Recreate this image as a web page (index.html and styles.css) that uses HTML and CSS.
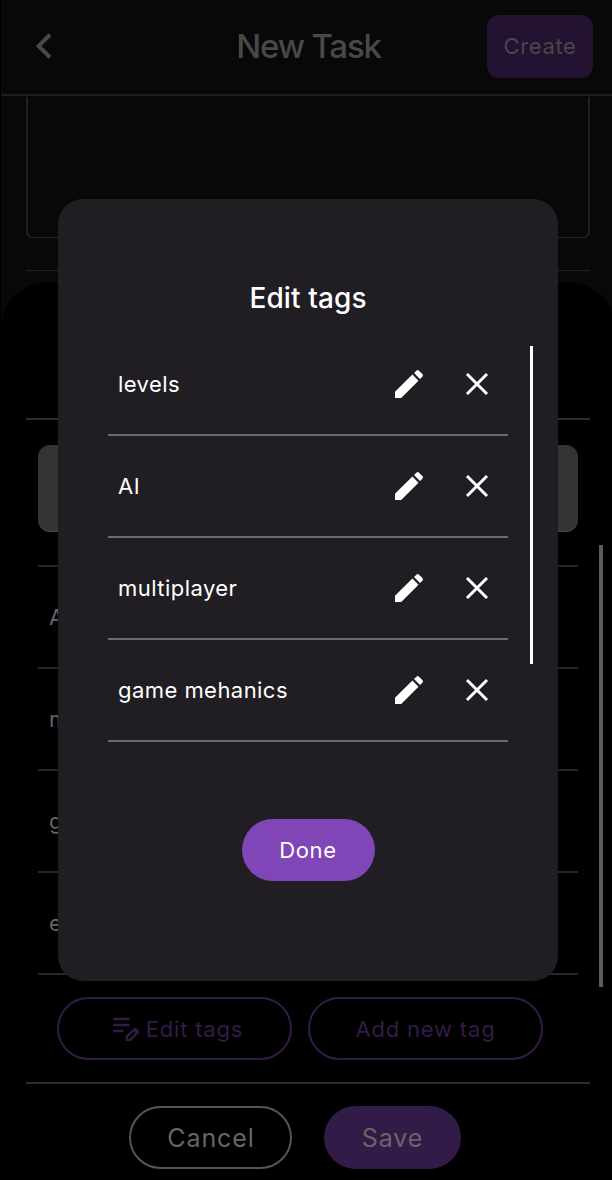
FILE: index.html
```html
<!DOCTYPE html>
<html lang="en">
<head>
<meta charset="utf-8">
<title>New Task</title>
<link rel="stylesheet" href="styles.css">
</head>
<body>
<svg class="defs" aria-hidden="true">
  <symbol id="pencil" viewBox="0 0 30 30"><path d="M1 29V22.8L18.4 5.6 24.5 11.7 7.2 29zM20 4.1 22.4 1.7Q23.7.4 25 1.7L28.4 5.1Q29.6 6.4 28.4 7.7L26 10.1z"/></symbol>
  <symbol id="cross" viewBox="0 0 24 24"><path d="M2 2 22 22M22 2 2 22"/></symbol>
</svg>
<div class="screen">
  <header class="topbar">
    <svg class="back" viewBox="0 0 16 26"><path d="M14 1.7 2.5 13 14 24.3"/></svg>
    <h1 class="title">New Task</h1>
    <button class="create">Create</button>
  </header>
  <main class="form">
    <div class="field"></div>
    <div class="form-line"></div>
  </main>

  <section class="sheet">
    <div class="sheet-head"></div>
    <ul class="options">
      <li class="option option-first"><div class="selected"></div></li>
      <li class="option">AI</li>
      <li class="option">multiplayer</li>
      <li class="option">game mehanics</li>
      <li class="option">enemies</li>
    </ul>
    <div class="tag-actions">
      <button class="outline purple with-icon"><svg class="list-edit" viewBox="0 0 28 24"><path class="lines" d="M1 2H17.5M1 8H17.5M1 14H11.5"/><path class="pen" d="M14.8 22.8V19.6L22.6 12 25.9 15.2 18.2 22.8z"/><path class="tip" d="M20.8 13.7 23.1 11.4Q24 10.6 24.9 11.4L26.6 13.1Q27.4 14 26.6 14.9L24.3 17.1z"/></svg>Edit tags</button>
      <button class="outline purple">Add new tag</button>
    </div>
    <footer class="sheet-foot">
      <button class="outline cancel">Cancel</button>
      <button class="save">Save</button>
    </footer>
    <div class="sheet-scroll"></div>
  </section>

  <section class="modal">
    <h2 class="modal-title">Edit tags</h2>
    <ul class="tags">
      <li class="tag"><span class="name">levels</span><svg class="pencil"><use href="#pencil"/></svg><svg class="cross"><use href="#cross"/></svg></li>
      <li class="tag"><span class="name">AI</span><svg class="pencil"><use href="#pencil"/></svg><svg class="cross"><use href="#cross"/></svg></li>
      <li class="tag"><span class="name">multiplayer</span><svg class="pencil"><use href="#pencil"/></svg><svg class="cross"><use href="#cross"/></svg></li>
      <li class="tag"><span class="name">game mehanics</span><svg class="pencil"><use href="#pencil"/></svg><svg class="cross"><use href="#cross"/></svg></li>
    </ul>
    <button class="done">Done</button>
    <div class="modal-scroll"></div>
  </section>
</div>
</body>
</html>
```
FILE: styles.css
```css
* { box-sizing: border-box; }
body { margin: 0; background: #000; font-family: Inter, "Liberation Sans", sans-serif; }
h1, h2, ul { margin: 0; padding: 0; }
ul { list-style: none; }
button { font: inherit; border: 0; padding: 0; background: none; display: flex; align-items: center; justify-content: center; }
.defs { position: absolute; width: 0; height: 0; }
.screen { position: relative; width: 612px; height: 1180px; overflow: hidden; padding-left: 1px; }

.topbar { height: 96px; padding: 0 19px 2px 35px; display: grid; grid-template-columns: 94px 1fr 106px; align-items: center; background: #080808; border-bottom: 2px solid #1e1e1e; }
.back { width: 16px; height: 26px; fill: none; stroke: #484848; stroke-width: 4; }
.title { font-size: 33px; line-height: 40px; font-weight: 500; color: #484848; text-align: center; white-space: nowrap; letter-spacing: -1.2px; }
.create { height: 63px; border-radius: 12px; background: #241232; color: #484848; font-size: 22px; letter-spacing: .6px; }
.form { height: 420px; padding: 1px 22px 0 25px; background: #080808; }
.field { height: 141px; border: 2px solid #222; border-top: 0; border-bottom-width: 1px; border-radius: 0 0 6px 6px; }
.form-line { height: 1px; margin-top: 32px; background: #222; }

.sheet { position: absolute; left: 1px; top: 283px; width: 614px; height: 897px; background: #000; border-radius: 45px 45px 0 0; }
.sheet-head { height: 137px; margin: 0 25px; border-bottom: 2px solid #2b2b2b; }
.options { margin: 0 37px; padding-top: 25px; }
.option { height: 102px; padding-left: 11px; display: flex; align-items: center; border-bottom: 2px solid #272727; color: #666; font-size: 22px; letter-spacing: .5px; }
.option-first { height: 122px; padding: 0; align-items: flex-start; }
.selected { width: 100%; height: 87px; border-radius: 12px; background: #343434; border-bottom: 1px solid #484848; }
.tag-actions { display: flex; gap: 16px; margin: 22px 0 0 56px; }
.outline { height: 63px; border-radius: 32px; border: 2px solid; }
.purple { width: 235px; color: #331b48; font-size: 22px; letter-spacing: .8px; }
.with-icon { padding-left: 7px; }
.list-edit { width: 28px; height: 24px; margin: 0 6px 0 -1px; fill: none; stroke: #331b48; stroke-width: 2.3; }
.list-edit .tip { fill: #331b48; stroke: none; }
.sheet-foot { display: flex; justify-content: center; gap: 32px; margin: 22px 25px 0; padding: 22px 26px 0 0; border-top: 2px solid #2b2b2b; font-size: 25px; color: #666; }
.cancel { width: 163px; padding-left: 1px; color: #666; border-color: #555; letter-spacing: .9px; }
.save { width: 137px; height: 63px; border-radius: 32px; background: #331b48; color: #666; letter-spacing: .9px; }
.sheet-scroll { position: absolute; left: 598px; top: 262px; width: 4px; height: 442px; background: #5c5c5c; }

.modal { position: absolute; left: 58px; top: 199px; width: 500px; height: 782px; padding: 80px 50px 0; background: #201e23; border-radius: 25px; color: #fff; }
.modal-title { font-size: 28px; line-height: 38px; font-weight: 500; text-align: center; letter-spacing: .1px; }
.tags { padding-top: 17px; }
.tag { height: 101.9px; padding: 0 19px 0 10px; display: flex; align-items: center; border-bottom: 2px solid #6d6b70; }
.name { flex: 1; font-size: 22px; letter-spacing: .45px; }
.pencil { width: 30px; height: 30px; margin-right: 41px; fill: #fff; }
.cross { width: 24px; height: 24px; fill: none; stroke: #fff; stroke-width: 3; }
.done { width: 133px; height: 62px; margin: 77.4px auto 0; border-radius: 31px; background: #8045b7; color: #fff; font-size: 22px; letter-spacing: .6px; }
.modal-scroll { position: absolute; left: 472px; top: 147px; width: 3px; height: 318px; background: #fff; }
```
